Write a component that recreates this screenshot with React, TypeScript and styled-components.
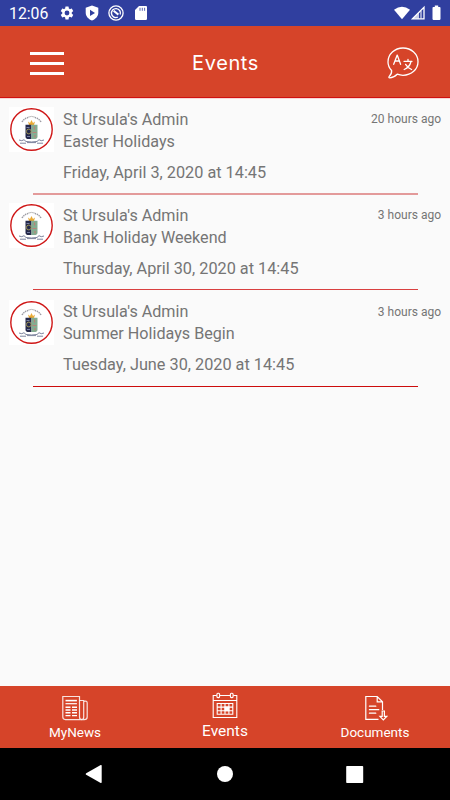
import React from "react";
import styled, { createGlobalStyle } from "styled-components";

const GlobalStyle = createGlobalStyle`
  body {
    margin: 0;
    font-family: Roboto, sans-serif;
    background: #fafafa;
  }

  svg {
    display: block;
    flex-shrink: 0;
  }
`;

const Screen = styled.div`
  width: 450px;
  height: 800px;
  display: flex;
  flex-direction: column;
  overflow: hidden;
  background: #fafafa;
`;

const StatusBar = styled.div`
  height: 26px;
  flex-shrink: 0;
  display: flex;
  align-items: center;
  box-sizing: border-box;
  padding: 0 7px 0 9px;
  background: #303f9f;
  color: #ffffff;
`;

const Clock = styled.span`
  width: 50px;
  font-size: 15.8px;
  line-height: 26px;
  padding-top: 2px;
`;

const StatusIcons = styled.div`
  display: flex;
  align-items: center;
  gap: 8.5px;
`;

const SignalIcons = styled.div`
  display: flex;
  align-items: center;
  margin-left: auto;
`;

const Header = styled.header`
  height: 72px;
  flex-shrink: 0;
  box-sizing: border-box;
  display: grid;
  grid-template-columns: 80px 1fr 80px;
  align-items: center;
  background: #d64429;
  border-bottom: 1px solid #d01010;
`;

const MenuButton = styled.div`
  display: flex;
  flex-direction: column;
  gap: 7px;
  width: 34px;
  margin-left: 30px;
  padding-top: 3px;
`;

const MenuBar = styled.span`
  height: 3px;
  background: #ffffff;
`;

const Title = styled.h1`
  margin: 0;
  padding: 3px 0 0 1px;
  text-align: center;
  font-family: Inter, sans-serif;
  font-weight: 400;
  font-size: 20px;
  letter-spacing: 0.6px;
  color: #ffffff;
`;

const TranslateButton = styled.div`
  margin-left: 17px;
  padding-top: 2px;
`;

const EventList = styled.main`
  flex: 1;
  border-top: 1px solid #f8d6d6;
`;

const EventRow = styled.article`
  height: 96.33px;
  box-sizing: border-box;
  display: grid;
  grid-template-columns: 45px 1fr auto;
  column-gap: 9px;
  align-content: start;
  padding: 8px 9px 0;
  color: #757575;
`;

const Avatar = styled.div`
  width: 45px;
  height: 45px;
  background: #ffffff;
`;

const EventText = styled.div`
  font-size: 16.15px;
  line-height: 22px;
  padding-top: 1.75px;
`;

const EventDate = styled.div`
  margin-top: 9px;
  font-size: 16.27px;
`;

const Posted = styled.time`
  font-size: 12px;
  line-height: 24px;
`;

const Divider = styled.div<{ $thickness: number; $color: string }>`
  grid-column: 1 / -1;
  height: ${({ $thickness }) => $thickness}px;
  margin: 9.25px 23.5px 0 24px;
  background: ${({ $color }) => $color};
`;

const TabBar = styled.nav`
  height: 62px;
  flex-shrink: 0;
  display: grid;
  grid-template-columns: repeat(3, 1fr);
  background: #d64429;
`;

const Tab = styled.div<{ $active?: boolean }>`
  display: flex;
  flex-direction: column;
  align-items: center;
  box-sizing: border-box;
  padding-top: ${({ $active }) => ($active ? "6px" : "9px")};
  gap: ${({ $active }) => ($active ? "2px" : "1px")};
  font-size: ${({ $active }) => ($active ? "15.5px" : "13.5px")};
  line-height: 20px;
  color: #ffffff;
`;

const SystemBar = styled.div`
  height: 52px;
  flex-shrink: 0;
  display: flex;
  justify-content: space-between;
  align-items: center;
  box-sizing: border-box;
  padding: 0 86px 0 85px;
  background: #000000;
`;

const SettingsIcon = () => (
  <svg width="16" height="16" viewBox="0 0 24 24" fill="#fff">
    <path d="M19.14 12.94a7.1 7.1 0 0 0 0-1.88l2.03-1.58a.5.5 0 0 0 .12-.61l-1.92-3.32a.5.5 0 0 0-.59-.22l-2.39.96a7 7 0 0 0-1.62-.94L14.4 2.8a.5.5 0 0 0-.48-.4h-3.84a.5.5 0 0 0-.47.4l-.36 2.55a7.2 7.2 0 0 0-1.62.94l-2.39-.96a.5.5 0 0 0-.59.22L2.74 8.87a.5.5 0 0 0 .12.61l2.03 1.58a7 7 0 0 0 0 1.88l-2.03 1.58a.5.5 0 0 0-.12.61l1.92 3.32c.12.22.37.29.59.22l2.39-.96c.5.38 1.03.7 1.62.94l.36 2.54c.05.24.24.41.48.41h3.84c.24 0 .44-.17.47-.41l.36-2.54a7 7 0 0 0 1.62-.94l2.39.96c.22.08.47 0 .59-.22l1.92-3.32a.5.5 0 0 0-.12-.61zM12 15.6a3.6 3.6 0 1 1 0-7.2 3.6 3.6 0 0 1 0 7.2z" />
  </svg>
);

const ShieldIcon = () => (
  <svg width="16" height="16" viewBox="0 0 16 16" fill="#fff" fillRule="evenodd">
    <path d="M8 .4 14.3 2.8V7.5c0 3.8-2.6 6.6-6.3 8-3.7-1.4-6.3-4.2-6.3-8V2.8zM6 4.8v6.2l5-3.1z" />
  </svg>
);

const DataSaverIcon = () => (
  <svg width="16" height="16" viewBox="0 0 16 16" fill="none" stroke="#fff">
    <circle cx="8" cy="8" r="7.1" strokeWidth="1.3" />
    <path d="M9.8 12.2A4.5 4.5 0 1 1 12.2 9.6" strokeWidth="1.4" />
    <path d="M5.6 5.8 10.4 9.6" strokeWidth="2" />
  </svg>
);

const SdCardIcon = () => (
  <svg width="14" height="14" viewBox="-2 0 14 14">
    <path d="M4 0h6.7A1.2 1.2 0 0 1 12 1.2v11.6a1.2 1.2 0 0 1-1.2 1.2H1.2A1.2 1.2 0 0 1 0 12.8V4z" fill="#fff" />
    <path d="M5 1.8v3M7.3 1.8v3M9.6 1.8v3" stroke="#303f9f" strokeWidth=".8" />
  </svg>
);

const SignalDrawing = () => (
  <svg width="50" height="16" viewBox="0 0 50 16">
    <path d="M1 4.7Q9-1 17 4.7L9 14.3z" fill="#fff" />
    <path d="M19.5 13.8 31 2.3v11.5z" fill="none" stroke="#fff" strokeWidth="1.3" />
    <path d="M26 7.3v6.5h-6.5z" fill="#fff" opacity=".75" />
    <path d="M28 6v7.5" stroke="#fff" strokeWidth="1" />
    <path d="M40.8 2.1V.5h3.4v1.6h1.5c.5 0 .8.3.8.8v11.2c0 .5-.3.8-.8.8h-6.4a.8.8 0 0 1-.8-.8V2.9c0-.5.3-.8.8-.8z" fill="#fff" transform="translate(1 0)" />
  </svg>
);

const TranslateIcon = () => (
  <svg width="32" height="32" viewBox="0 0 32 32" fill="none" stroke="#fff" strokeWidth="1.3" strokeLinecap="round" strokeLinejoin="round">
    <path d="M4.6 23.5C2.2 21 1 18.3 1 15 1 7.2 7.6 1 16 1s15 6.2 15 13.7-6.5 13.6-15 13.6c-2.1 0-4-.4-5.8-1.1-2.3 2.3-4.8 3.6-7.6 3.6-.8 0-1-.7-.5-1.2 2-1.9 2.8-3.7 2.5-6.1z" />
    <path d="m6.7 17.3 3.5-9.2 3.4 9.2M7.9 14h4.6M17 14.3h8M21 12.4v1.9M24 14.5c-.9 3.9-3.3 6.5-6.8 8M18.6 17.4c1.5 2.5 3.4 4.1 6 5.1" />
  </svg>
);

const Crest = () => (
  <svg width="45" height="45" viewBox="0 0 45 45">
    <circle cx="22.5" cy="22.5" r="20.7" fill="#fff" stroke="#cf1717" strokeWidth="1.4" />
    <path d="M13 15q2-3.5 6-4.5M32 15q-2-3.5-6-4.5" fill="none" stroke="#9b9ba3" strokeWidth="1.4" strokeDasharray="1.5 .7" />
    <path d="M19 10.2q3.5-1.6 7 0" fill="none" stroke="#bbb" strokeWidth="1" />
    <path d="m19 14.5 2 1.5 1.5-3 1.5 3 2-1.5-1 3.4h-5z" fill="#eaaa35" />
    <path d="M16.5 17.8h6v14.2h-2.6q-3.4 0-3.4-2.6z" fill="#25294b" />
    <path d="M22.5 17.8h6v11.6q0 2.6-3.4 2.6h-2.6z" fill="#83ad91" />
    <circle cx="19.8" cy="24.5" r="2.4" fill="none" stroke="#a59b55" strokeWidth=".9" />
    <path d="M17.5 20.5h3M18 29.5h3" stroke="#7780a3" strokeWidth="1" />
    <path d="M25.5 19.5v3M23.5 25.5h4M26 28v2.5" stroke="#b98279" strokeWidth="1.2" />
    <path d="M10 33q3 1.5 5-.3l2 1.8q5.5 1 11 0l2-1.8q2 1.8 5 .3M11 36.2h6M18 35.6h9M28 36.2h6" fill="none" stroke="#7d849e" strokeWidth="1" />
  </svg>
);

const NewsIcon = () => (
  <svg width="26" height="26" viewBox="0 0 26 26" fill="none" stroke="#fff" strokeWidth="1.2">
    <path d="M17.5 4.5V22q0 2.6 2.6 2.6H3.4Q.8 24.6.8 22V1.5h16.7v3" strokeOpacity=".85" />
    <path d="M17.5 5.5h4.2V22q0 2.6-2 2.6M21.7 6.5q3.5-1.2 3.5 1.5v14q0 2.6-3 2.6h-2.7" strokeOpacity=".85" />
    <path d="M3.5 5.6h11.4" strokeWidth="1.6" />
    <path d="M3.5 8.7h11.4" />
    <path d="M3.5 12.2h5M10 12.2h5M3.5 15h5M10 15h5M3.5 17.8h5M10 17.8h5M3.5 20.6h5M10 20.6h5" strokeWidth="1.4" />
  </svg>
);

const CalendarIcon = () => (
  <svg width="26" height="27" viewBox="0 0 26 27" fill="none" stroke="#fff" strokeWidth="1.1">
    <path d="M4.7 3.5H1.2v22h23.6v-22h-3.5M8 3.5h10M1.2 8.5h23.6" />
    <rect x="4.9" y="1.3" width="2.7" height="4.3" rx="1" />
    <rect x="18.4" y="1.3" width="2.7" height="4.3" rx="1" />
    <path d="M5.2 11.5h15.6v10.8H5.2zM9.1 11.5v10.8M13 11.5v10.8M16.9 11.5v10.8M5.2 15.1h15.6M5.2 18.7h15.6" />
    <path d="M13 15.1h3.9v3.6H13z" fill="#fff" />
  </svg>
);

const DocumentIcon = () => (
  <svg width="26" height="26" viewBox="0 0 26 26" fill="none" stroke="#fff" strokeWidth="1.2">
    <path d="M16.5 24.4H3.8V1.5h11.4l5.3 5.3v8.2M15.2 1.5v5.3h5.3" />
    <path d="M7.4 11.2h6.4M7.4 14.7h9.4M7.4 18.2h6.4" strokeLinecap="round" />
    <path d="M20.2 16h2.2v5.4h2.3l-3.4 3.6-3.4-3.6h2.3z" />
  </svg>
);

const BackIcon = () => (
  <svg width="18" height="18" viewBox="0 0 18 18" fill="#fff">
    <path d="M1.2 8.2 15.7.1q.9-.3 1 .6v16.6q-.1.9-1 .6L1.2 9.8q-1-.8 0-1.6z" />
  </svg>
);

const HomeIcon = () => (
  <svg width="17" height="16" viewBox="0 0 17 16">
    <circle cx="9" cy="8" r="8" fill="#fff" />
  </svg>
);

const RecentsIcon = () => (
  <svg width="18" height="17" viewBox="0 0 18 17">
    <rect x="0.2" y="0" width="17" height="17" rx=".8" fill="#fff" />
  </svg>
);

type SchoolEvent = {
  title: string;
  date: string;
  posted: string;
  lineThickness: number;
  lineColor: string;
};

const events: SchoolEvent[] = [
  {
    title: "Easter Holidays",
    date: "Friday, April 3, 2020 at 14:45",
    posted: "20 hours ago",
    lineThickness: 2,
    lineColor: "#e39a9a",
  },
  {
    title: "Bank Holiday Weekend",
    date: "Thursday, April 30, 2020 at 14:45",
    posted: "3 hours ago",
    lineThickness: 1,
    lineColor: "#d94040",
  },
  {
    title: "Summer Holidays Begin",
    date: "Tuesday, June 30, 2020 at 14:45",
    posted: "3 hours ago",
    lineThickness: 1,
    lineColor: "#cc0c0c",
  },
];

function App() {
  return (
    <>
      <GlobalStyle />
      <Screen>
        <StatusBar>
          <Clock>12:06</Clock>
          <StatusIcons>
            <SettingsIcon />
            <ShieldIcon />
            <DataSaverIcon />
            <SdCardIcon />
          </StatusIcons>
          <SignalIcons>
            <SignalDrawing />
          </SignalIcons>
        </StatusBar>
        <Header>
          <MenuButton>
            <MenuBar />
            <MenuBar />
            <MenuBar />
          </MenuButton>
          <Title>Events</Title>
          <TranslateButton>
            <TranslateIcon />
          </TranslateButton>
        </Header>
        <EventList>
          {events.map((event) => (
            <EventRow key={event.title}>
              <Avatar>
                <Crest />
              </Avatar>
              <EventText>
                <div>St Ursula's Admin</div>
                <div>{event.title}</div>
                <EventDate>{event.date}</EventDate>
              </EventText>
              <Posted>{event.posted}</Posted>
              <Divider $thickness={event.lineThickness} $color={event.lineColor} />
            </EventRow>
          ))}
        </EventList>
        <TabBar>
          <Tab>
            <NewsIcon />
            MyNews
          </Tab>
          <Tab $active>
            <CalendarIcon />
            Events
          </Tab>
          <Tab>
            <DocumentIcon />
            Documents
          </Tab>
        </TabBar>
        <SystemBar>
          <BackIcon />
          <HomeIcon />
          <RecentsIcon />
        </SystemBar>
      </Screen>
    </>
  );
}

export default App;
